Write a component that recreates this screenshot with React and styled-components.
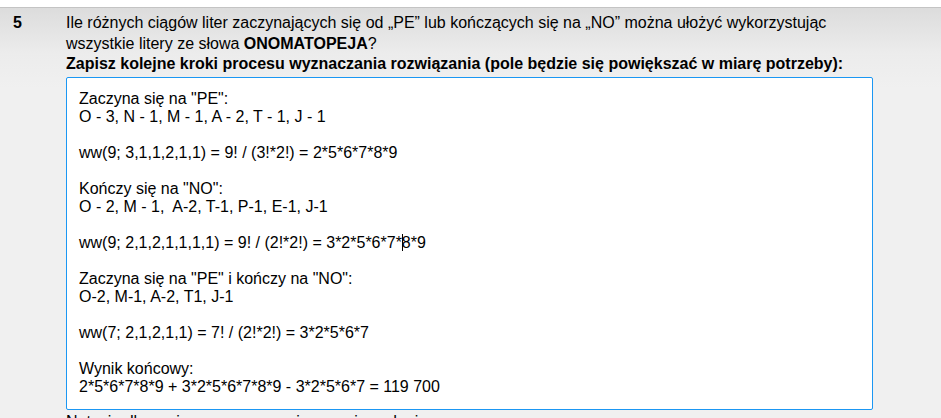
import React from "react";
import styled, { createGlobalStyle } from "styled-components";

const Global = createGlobalStyle`
  html, body { margin: 0; padding: 0; background: #f0f0f0; }
  body { font-family: "Liberation Sans", Arial, sans-serif; color: #000; }
`;

const Page = styled.div`
  width: 941px;
  height: 418px;
  overflow: hidden;
  background: #f0f0f0;
`;

const TopGap = styled.div`
  height: 7px;
  background: #ffffff;
  border-bottom: 1px solid #c4c4c4;
`;

const Row = styled.div`
  display: grid;
  grid-template-columns: 66px 807px;
  background: linear-gradient(to bottom, #dcdcdc 0px, #ececec 45px, #f0f0f0 80px);
`;

const Num = styled.div`
  font-weight: bold;
  font-size: 16px;
  padding: 4px 0 0 13px;
  line-height: 21px;
`;

const Body = styled.div`
  padding-top: 4px;
  font-size: 16px;
`;

const Question = styled.p`
  margin: 0;
  line-height: 21px;
`;

const Instruction = styled.p`
  margin: 0;
  font-weight: bold;
  line-height: 20px;
  padding-bottom: 3px;
`;

const AnswerBox = styled.div`
  background: #fff;
  border: 1px solid #1b97f3;
  border-radius: 2px;
  padding: 12px 12px 13px 12px;
  font-size: 16px;
  line-height: 18px;
  min-height: 304px;
`;

const Line = styled.div`
  min-height: 18px;
  white-space: pre;
`;

const Caret = styled.span`
  display: inline-block;
  width: 1px;
  height: 17px;
  background: #000;
  vertical-align: -3px;
  margin-right: -1px;
`;

const Note = styled.p`
  margin: 0;
  padding-top: 3px;
  line-height: 18px;
  font-size: 16px;
`;

const lines = [
  'Zaczyna się na "PE":',
  "O - 3, N - 1, M - 1, A - 2, T - 1, J - 1",
  "",
  "ww(9; 3,1,1,2,1,1) = 9! / (3!*2!) = 2*5*6*7*8*9",
  "",
  'Kończy się na "NO":',
  "O - 2, M - 1,  A-2, T-1, P-1, E-1, J-1",
  "",
  "CARET",
  "",
  'Zaczyna się na "PE" i kończy na "NO":',
  "O-2, M-1, A-2, T1, J-1",
  "",
  "ww(7; 2,1,2,1,1) = 7! / (2!*2!) = 3*2*5*6*7",
  "",
  "Wynik końcowy:",
  "2*5*6*7*8*9 + 3*2*5*6*7*8*9 - 3*2*5*6*7 = 119 700",
];

export default function App() {
  return (
    <Page>
      <Global />
      <TopGap />
      <Row>
        <Num>5</Num>
        <Body>
          <Question>
            Ile różnych ciągów liter zaczynających się od „PE” lub kończących się na „NO” można ułożyć wykorzystując
            wszystkie litery ze słowa <b>ONOMATOPEJA</b>?
          </Question>
          <Instruction>
            Zapisz kolejne kroki procesu wyznaczania rozwiązania (pole będzie się powiększać w miarę potrzeby):
          </Instruction>
          <AnswerBox>
            {lines.map((l, i) =>
              l === "CARET" ? (
                <Line key={i}>
                  ww(9; 2,1,2,1,1,1,1) = 9! / (2!*2!) = 3*2*5*6*7*<Caret />8*9
                </Line>
              ) : (
                <Line key={i}>{l}</Line>
              )
            )}
          </AnswerBox>
          <Note>Notacja dla zapisu procesu rozwiązywania zadania:</Note>
        </Body>
      </Row>
    </Page>
  );
}
